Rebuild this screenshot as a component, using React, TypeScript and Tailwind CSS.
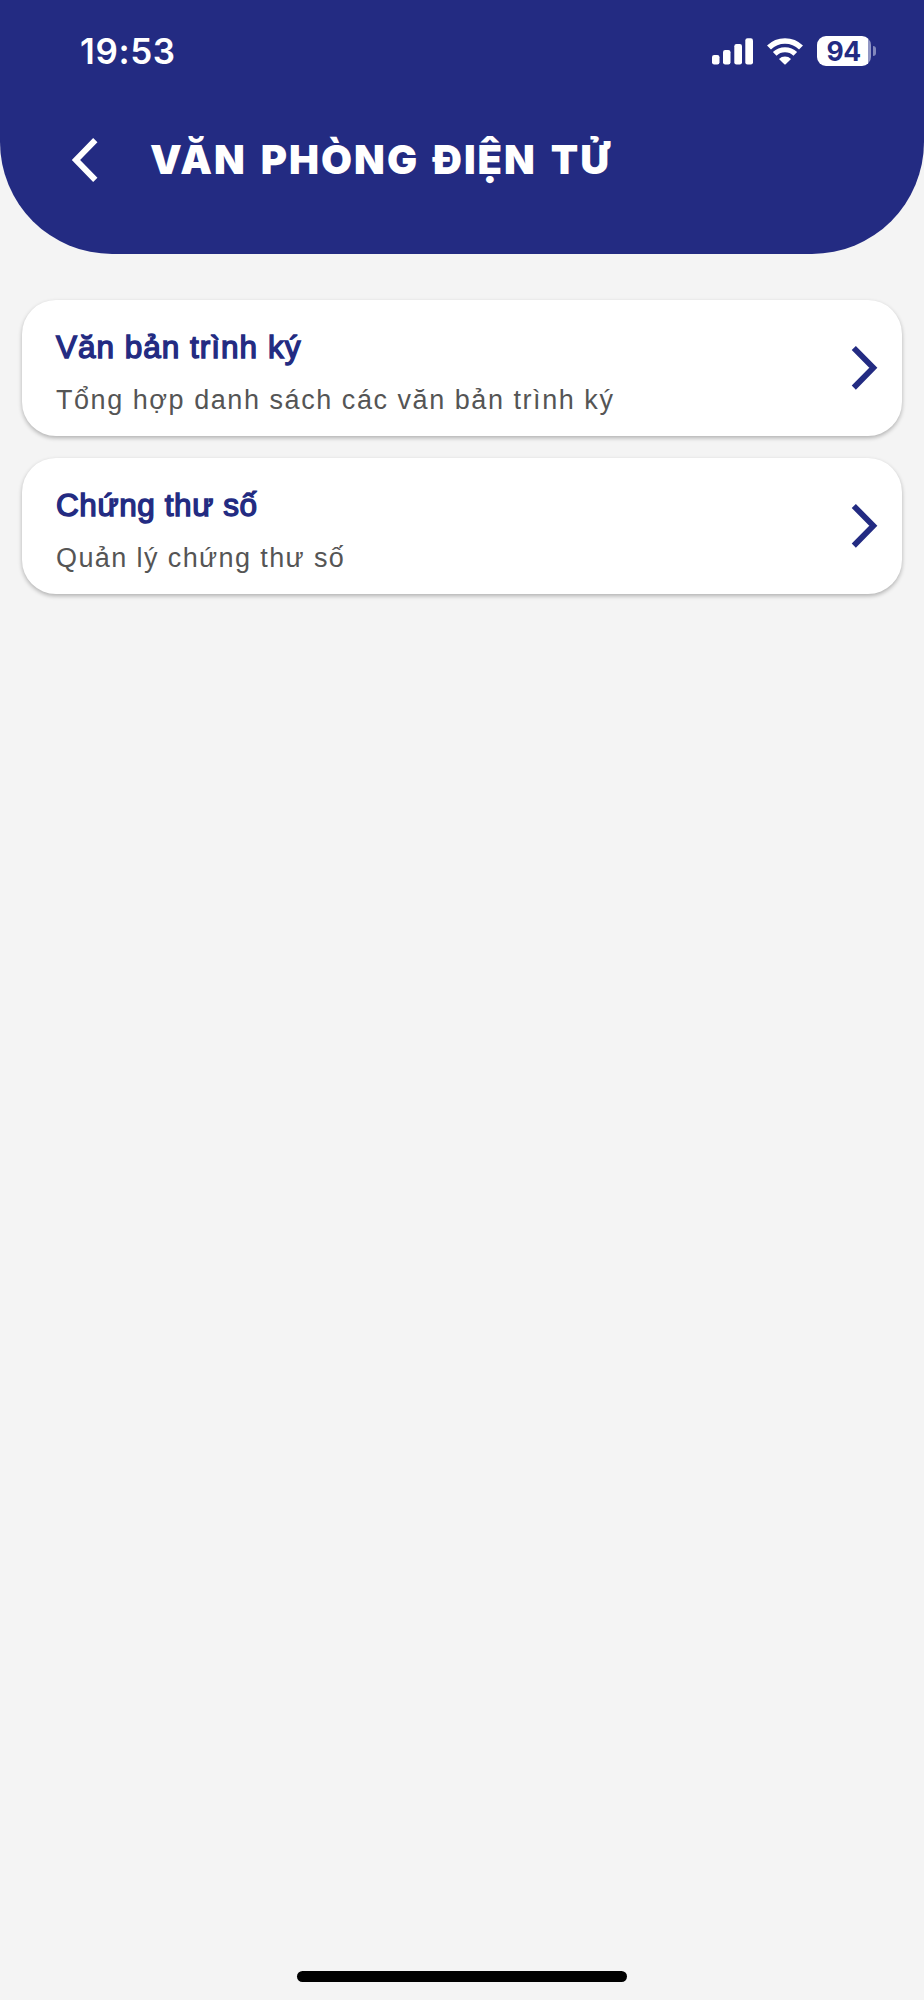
import React from 'react';

interface MenuItem {
  title: string;
  description: string;
  titleClass: string;
  descriptionClass: string;
}

const menuItems: MenuItem[] = [
  {
    title: 'Văn bản trình ký',
    description: 'Tổng hợp danh sách các văn bản trình ký',
    titleClass: 'tracking-[1px]',
    descriptionClass: 'tracking-[1.55px]',
  },
  {
    title: 'Chứng thư số',
    description: 'Quản lý chứng thư số',
    titleClass: 'tracking-[0.6px]',
    descriptionClass: 'tracking-[1.4px]',
  },
];

const SignalIcon = () => (
  <svg width="41" height="27" viewBox="0 0 41 27" fill="#fff">
    <rect x="0" y="17" width="7.5" height="9.5" rx="2.2" />
    <rect x="11" y="12" width="7.5" height="14.5" rx="2.2" />
    <rect x="22.3" y="6" width="7.7" height="20.5" rx="2.2" />
    <rect x="33.3" y="0.3" width="7.7" height="26.2" rx="2.2" />
  </svg>
);

const WifiIcon = () => (
  <svg width="36" height="27" viewBox="0 0 36 27" fill="none">
    <path d="M2 9.6a22.8 22.8 0 0 1 32 0" stroke="#fff" strokeWidth="5.6" />
    <path d="M7.7 15.9a14.8 14.8 0 0 1 20.6 0" stroke="#fff" strokeWidth="5.2" />
    <path d="M12 21a8.7 8.7 0 0 1 12 0L18.7 26.3q-.7.6-1.4 0z" fill="#fff" />
  </svg>
);

const Battery = () => (
  <div className="flex items-center gap-[2px]">
    <div className="flex h-[30px] w-[54px] items-center justify-center rounded-[9px] bg-[linear-gradient(to_right,#fff_51px,#9196c4_51px)] pr-[1px]">
      <span className="font-['Inter',sans-serif] text-[26.5px] leading-[30px] font-bold tracking-[-0.6px] text-[#232b82]">
        94
      </span>
    </div>
    <div className="h-[10px] w-[3px] rounded-r-full bg-[#8288bc]" />
  </div>
);

const StatusBar = () => (
  <div className="flex h-[102px] items-center justify-between pr-[48px] pl-[80px]">
    <span className="font-['Inter',sans-serif] text-[35px] leading-[40px] font-semibold tracking-[0.6px] text-white">
      19:53
    </span>
    <div className="flex items-center gap-[14px]">
      <SignalIcon />
      <WifiIcon />
      <Battery />
    </div>
  </div>
);

const Header = () => (
  <header className="h-[254px] rounded-b-[112px] bg-[#232b82]">
    <StatusBar />
    <div className="flex h-[116px] items-center pl-[71px]">
      <svg width="28" height="44" viewBox="0 0 28 44" fill="none">
        <path d="M24.3 2.2L5 22l19.3 19.8" stroke="#fff" strokeWidth="6" />
      </svg>
      <h1 className="pl-[51px] font-['Inter',sans-serif] text-[40px] leading-[48px] font-black tracking-[2px] [word-spacing:4px] whitespace-nowrap text-white">
        VĂN PHÒNG ĐIỆN TỬ
      </h1>
    </div>
  </header>
);

const MenuCard = ({ item }: { item: MenuItem }) => (
  <button className="flex h-[136px] w-full items-center justify-between rounded-[34px] bg-white pr-[24.5px] pl-[34px] text-left shadow-[0_2px_4px_rgba(0,0,0,0.28)]">
    <div className="pt-[8px] font-['Liberation_Sans',Arial,sans-serif] whitespace-nowrap">
      <h2 className={`text-[31.5px] leading-[40px] text-[#232b82] [-webkit-text-stroke:1.4px_#232b82] ${item.titleClass}`}>
        {item.title}
      </h2>
      <p className={`pt-[15px] text-[27px] leading-[36px] text-[#555] ${item.descriptionClass}`}>{item.description}</p>
    </div>
    <svg width="28" height="46" viewBox="0 0 28 46" fill="none">
      <path d="M3.8 3L23.3 22.8L3.8 42.6" stroke="#232b82" strokeWidth="5.8" />
    </svg>
  </button>
);

export default function App() {
  return (
    <div className="flex h-[2000px] w-[924px] flex-col bg-[#f4f4f4]">
      <Header />
      <main className="flex flex-1 flex-col gap-[22px] px-[22px] pt-[46px]">
        {menuItems.map((item) => (
          <MenuCard key={item.title} item={item} />
        ))}
      </main>
      <div className="mb-[18px] h-[11px] w-[330px] self-center rounded-full bg-black" />
    </div>
  );
}
